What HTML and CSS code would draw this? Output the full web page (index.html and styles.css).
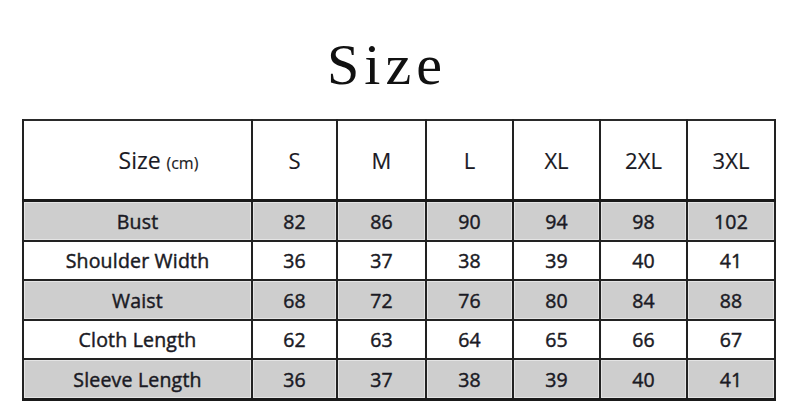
FILE: index.html
```html
<!DOCTYPE html>
<html>
<head>
<meta charset="utf-8">
<link rel="stylesheet" href="styles.css">
</head>
<body>
<div class="page">
  <h1 class="title">Size</h1>
  <table class="chart">
    <colgroup>
      <col class="c-label"><col class="c-s"><col class="c-m"><col class="c-l"><col class="c-xl"><col class="c-2xl"><col class="c-3xl">
    </colgroup>
    <thead>
      <tr class="head">
        <th class="label-head"><span class="big">Size</span> <span class="unit">(cm)</span></th>
        <th>S</th><th>M</th><th>L</th><th>XL</th><th>2XL</th><th>3XL</th>
      </tr>
    </thead>
    <tbody>
      <tr class="gray r1"><td>Bust</td><td>82</td><td>86</td><td>90</td><td>94</td><td>98</td><td>102</td></tr>
      <tr class="white r2"><td>Shoulder Width</td><td>36</td><td>37</td><td>38</td><td>39</td><td>40</td><td>41</td></tr>
      <tr class="gray r3"><td>Waist</td><td>68</td><td>72</td><td>76</td><td>80</td><td>84</td><td>88</td></tr>
      <tr class="white r4"><td>Cloth Length</td><td>62</td><td>63</td><td>64</td><td>65</td><td>66</td><td>67</td></tr>
      <tr class="gray r5"><td>Sleeve Length</td><td>36</td><td>37</td><td>38</td><td>39</td><td>40</td><td>41</td></tr>
    </tbody>
  </table>
</div>
</body>
</html>
```

FILE: styles.css
```css
html, body {
  margin: 0;
  padding: 0;
  background: #ffffff;
}

.page {
  width: 800px;
  height: 417px;
  overflow: hidden;
}

.title {
  box-sizing: border-box;
  height: 119px;
  margin: 0;
  padding-top: 36px;
  padding-right: 26px;
  font-family: "Liberation Serif", "DejaVu Serif", serif;
  font-weight: normal;
  font-size: 58px;
  line-height: 58px;
  letter-spacing: 5px;
  text-align: center;
  color: #111111;
}

.chart {
  margin-left: 22px;
  border-collapse: collapse;
  table-layout: fixed;
  width: 753px;
  font-family: "Open Sans", "Noto Sans", sans-serif;
  color: #1a1a24;
  border-top: 2px solid #2a2a2a;
  border-left: 2px solid #2a2a2a;
  border-right: 2px solid #2a2a2a;
  border-bottom: 3px solid #1a1a1a;
}

.c-label { width: 229px; }
.c-s { width: 85px; }
.c-m { width: 89px; }
.c-l { width: 87px; }
.c-xl { width: 87px; }
.c-2xl { width: 87px; }
.c-3xl { width: 88px; }

.chart th,
.chart td {
  border-left: 2px solid #222222;
  border-right: 2px solid #222222;
  padding: 0;
  text-align: center;
  vertical-align: middle;
}

.chart th {
  font-weight: 400;
  font-size: 22px;
  height: 78px;
  border-bottom: 3px solid #1a1a1a;
  -webkit-text-stroke: 0.15px #1a1a24;
}

.label-head {
  padding-left: 42px !important;
}

.big {
  font-size: 23px;
}

.unit {
  font-size: 16px;
  font-weight: 400;
}

.chart td {
  font-size: 19.5px;
  font-weight: 400;
  -webkit-text-stroke: 0.45px #1a1a24;
  letter-spacing: 0.2px;
  border-bottom: 2px solid #222222;
  height: 38px;
}

.r2 td { height: 37px; }
.r4 td { height: 37px; }
.r5 td { height: 38px; border-bottom: none; }

.gray td {
  background: #cecece;
  box-shadow: inset 0 0 0 1px #e4e4e4;
}

.white td {
  background: #ffffff;
}
```
